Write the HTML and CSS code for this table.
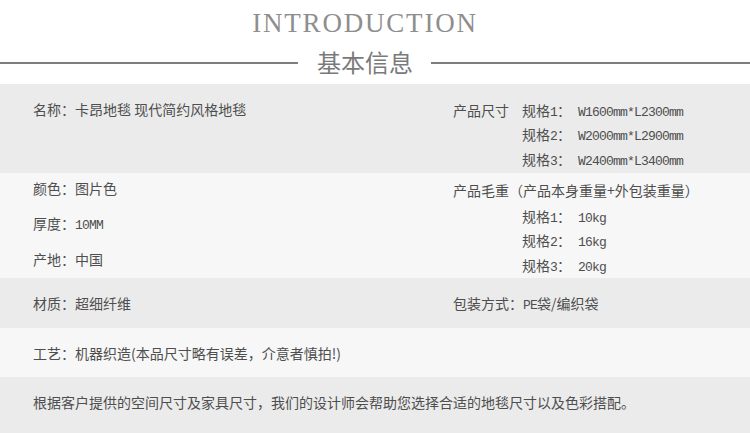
FILE: index.html
```html
<!DOCTYPE html>
<html lang="zh-CN">
<head>
<meta charset="utf-8">
<link rel="stylesheet" href="styles.css">
</head>
<body>
<div class="page">
  <header class="head">
    <div class="intro">INTRODUCTION</div>
    <div class="subtitle-row">
      <span class="rule rule-left"></span>
      <span class="subtitle">基本信息</span>
      <span class="rule rule-right"></span>
    </div>
  </header>

  <section class="row row-dark row-1">
    <div class="col-left">名称：卡昂地毯 现代简约风格地毯</div>
    <div class="col-right size-block">
      <div class="size-label">产品尺寸</div>
      <div class="specs">
        <div class="spec"><span class="spec-k">规格<span class="lat">1</span>：</span><span class="lat">W1600mm*L2300mm</span></div>
        <div class="spec"><span class="spec-k">规格<span class="lat">2</span>：</span><span class="lat">W2000mm*L2900mm</span></div>
        <div class="spec"><span class="spec-k">规格<span class="lat">3</span>：</span><span class="lat">W2400mm*L3400mm</span></div>
      </div>
    </div>
  </section>

  <section class="row row-light row-2">
    <div class="col-left list-left">
      <div class="item">颜色：图片色</div>
      <div class="item">厚度：<span class="lat">10MM</span></div>
      <div class="item">产地：中国</div>
    </div>
    <div class="col-right weight-block">
      <div class="wline">产品毛重（产品本身重量+外包装重量）</div>
      <div class="wline spec indent"><span class="spec-k">规格<span class="lat">1</span>：</span><span class="lat">10kg</span></div>
      <div class="wline spec indent"><span class="spec-k">规格<span class="lat">2</span>：</span><span class="lat">16kg</span></div>
      <div class="wline spec indent"><span class="spec-k">规格<span class="lat">3</span>：</span><span class="lat">20kg</span></div>
    </div>
  </section>

  <section class="row row-dark row-single row-3">
    <div class="col-left">材质：超细纤维</div>
    <div class="col-right">包装方式：<span class="lat">PE</span>袋/编织袋</div>
  </section>

  <section class="row row-light row-single row-4">
    <div class="col-left wide">工艺：机器织造(本品尺寸略有误差，介意者慎拍!)</div>
  </section>

  <section class="row row-dark row-single row-5">
    <div class="col-left wide">根据客户提供的空间尺寸及家具尺寸，我们的设计师会帮助您选择合适的地毯尺寸以及色彩搭配。</div>
  </section>
</div>
</body>
</html>
```

FILE: styles.css
```css
* { box-sizing: border-box; }

html, body {
  margin: 0;
  padding: 0;
  background: #ffffff;
}

body {
  font-family: "Noto Sans CJK SC", "Liberation Sans", sans-serif;
  font-size: 14px;
  color: #4e4e4e;
}

.page {
  width: 750px;
  height: 433px;
  overflow: hidden;
}

.head {
  height: 84px;
  padding-top: 8px;
}

.intro {
  font-family: "Liberation Serif", serif;
  font-size: 27px;
  line-height: 30px;
  letter-spacing: 1.8px;
  color: #8e8e8e;
  text-align: center;
  padding-right: 20px;
}

.subtitle-row {
  margin-top: 12px;
  display: grid;
  grid-template-columns: 298px auto 1fr;
  align-items: center;
  height: 24px;
}

.subtitle {
  font-size: 24px;
  line-height: 24px;
  color: #7a7a7a;
  margin: 0 18px 0 19px;
}

.rule {
  display: block;
  height: 2px;
  background: #7d7d7d;
  margin-top: 1px;
}

.row {
  display: grid;
  grid-template-columns: 420px 1fr;
  padding-left: 33px;
}

.row-dark { background: #ebebeb; }
.row-light { background: #f7f7f7; }

.lat {
  font-family: "Liberation Mono", monospace;
  font-size: 13px;
  letter-spacing: -0.8px;
  line-height: 1;
}

.row-1 {
  height: 89px;
  padding-top: 14px;
  line-height: 24px;
}

.row-1 .col-left { line-height: 22px; }

.size-block {
  display: flex;
}

.size-label {
  width: 69px;
  flex: none;
  height: 24px;
}

.spec {
  height: 24px;
  white-space: nowrap;
}

.specs .spec:nth-child(2) { height: 25px; }

.spec-k {
  margin-right: 7px;
}

.row-2 {
  height: 105px;
}

.list-left {
  margin-top: -2px;
}

.item {
  height: 35px;
  line-height: 35px;
  white-space: nowrap;
}

.item:nth-child(2) { height: 36px; }

.weight-block {
  padding-top: 6px;
}

.wline {
  height: 25px;
  line-height: 25px;
  white-space: nowrap;
}

.wline:first-child { height: 26px; margin-top: -1px; }
.wline:nth-child(2) { height: 24px; }

.indent {
  padding-left: 69px;
}

.row-single {
  align-items: center;
}

.row-3 { height: 50px; }
.row-4 { height: 49px; }
.row-5 { height: 56px; padding-bottom: 6px; }

.wide {
  grid-column: 1 / -1;
}
```
